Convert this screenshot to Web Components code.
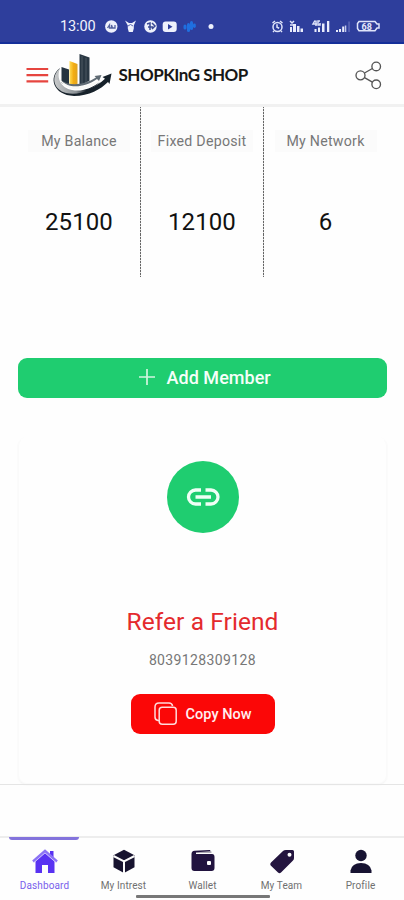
<!DOCTYPE html>
<html lang="en"><head><meta charset="utf-8"><title>Shopking Shop</title>
<style>html,body{margin:0;background:#fefefe}body{font-family:Roboto,"Liberation Sans",sans-serif;width:404px;height:900px;overflow:hidden}</style></head>
<body><shop-app></shop-app>
<script>
const define=(name,html)=>customElements.define(name,class extends HTMLElement{
  constructor(){super();const t=document.createElement('template');t.innerHTML=typeof html==='function'?html(this):html;this.attachShadow({mode:'open'}).append(t.content.cloneNode(true));}
});
define('status-bar',`<style>
:host{display:flex;box-sizing:border-box;height:44px;background:#2e3e9c;border-bottom:2px solid #142f99;padding:17px 24px 0 60px;justify-content:space-between;color:#f1f3fc}
.l{display:flex;gap:10px}time{font-size:14.5px;line-height:20px;width:35px;letter-spacing:-.1px;white-space:nowrap}svg{display:block}</style>
<div class="l"><time>13:00</time>
<svg width="112" height="20" viewBox="105 17 112 20"><g fill="#eef1fc"><circle cx="111.300" cy="26.500" r="6.200"/><path d="M125 20.500l4 2.500h3l4-2.500-2.200 5v3l-1 3.500h-4l-1-3.500v-3z"/><circle cx="150.500" cy="26.500" r="6.200"/><rect x="162.700" y="21.500" width="14" height="10.500" rx="3"/><circle cx="211" cy="26.500" r="2.500"/></g>
<path d="M107.500 28l2-3v3h2v-3l1 3h2.500v-3" fill="none" stroke="#56649f" stroke-width="1.300"/><path d="M147 24l3-1v7m-2-3h5m-1-4l3 3-3 3" fill="none" stroke="#394893" stroke-width="1.500"/><path d="M168 24l4.500 2.700-4.500 2.700z" fill="#2e3e9c"/><path d="M128 26l2.500-1.500L133 26" stroke="#5b69b2" fill="none"/><g fill="#1f6fe0"><rect x="183.500" y="24.500" width="3" height="5" rx="1.500"/><rect x="187" y="23" width="3" height="9" rx="1.500"/><rect x="190" y="21" width="3" height="9" rx="1.500"/><rect x="193" y="23.500" width="2.800" height="4.500" rx="1.400"/></g></svg></div>
<svg width="110" height="20" viewBox="270 17 110 20"><g fill="none" stroke="#dfe4fa" stroke-width="1.500"><circle cx="277.500" cy="27" r="4.500"/><path d="M277 24.300v3l2.200 1M272.500 23l2.500-2M280 21l2.500 2M274 31l-1 1m8-1l1 1M290 21l2 2 2-2M290 25h5M315 20.500l-2 3.500h4m-1-3.500V26m4-5h-2v4h2v-2"/><path d="M359 21.500h16l2 2.500h2v4h-2l-2 2.700h-16l-1.500-2.200v-5z"/></g>
<g fill="#e9ecfb"><path d="M290 27h2v5h-2zM293 24h3v8h-3zM297 26h2.500v6H297zM300.500 28.500h2.500V32h-2.500zM314.500 29h2v3h-2zM318 27.500h2V32h-2zM322 23.500h2.500V32H322zM327 21h2.300v11H327zM336 30h2v2h-2zM339 29h2v3h-2zM342.200 26.500h2V32h-2z"/></g><path d="M344.800 25.500h1.500V32h-1.500z" fill="#c2c9ed"/><path d="M348.300 21.500h1.500V32h-1.500z" fill="#5c68b8"/><text x="361.500" y="29.600" font-family="Roboto,sans-serif" font-size="9" font-weight="700" fill="#e5e9fb">68</text></svg>`);
define('brand-bar',`<style>:host{display:flex;box-sizing:border-box;height:63px;border-bottom:3px solid #f1f1f1;padding:0 21px 0 26px;background:#fefefe}svg{display:block;flex:none}
.name{flex:1;padding:19px 0 0 5.500px;font:700 17px/24px Lato,"Open Sans",sans-serif;letter-spacing:-.5px;color:#171717;white-space:nowrap}</style>
<svg width="87" height="60" viewBox="26 44 87 60"><defs><linearGradient id="sw" x1="0" x2="1"><stop stop-color="#c8cacb"/><stop offset=".48" stop-color="#8c9296"/><stop offset=".7" stop-color="#17212b"/></linearGradient><linearGradient id="y" x1="0" x2="1"><stop stop-color="#ffdc55"/><stop offset=".5" stop-color="#f4ad12"/><stop offset="1" stop-color="#dfa320"/></linearGradient></defs>
<path d="M26.500 69h21.700M26.500 75.200h21.700M26.500 81.300h21.700" stroke="#e6453f" stroke-width="2.200"/>
<path d="M61.500 67l4.500 1.500V85l-4.500-2zM66 68.500l3 1V85l-3 1z" fill="#253440"/><path d="M69.500 61l8 3v21l-8 2z" fill="url(#y)"/><path d="M79.500 54l10 3.500v23.300l-10 5z" fill="#293743"/><path d="M82 56v27M86 58v24" stroke="#4c5962"/>
<path d="M60 68C48 77 53 95 74 96c15 0 27-7 34-14l1.500 2L111.500 73.500l-9 3.500 2.500 1.800C93 90 76 95 65 90 56 86 54 77 60 68z" fill="#17222b"/>
<path d="M60 68C50 77 54 90 66 93c13 3 26-3 34-11-10 7-19 10-28 8-11-2-16-12-12-22z" fill="url(#sw)"/>
<path d="M59 78c4 11 18 14 31 9 5-2 9-5 12-8-14 8-33 11-43-1z" fill="#f8f8f6"/>
<path d="M61 80c7 9 23 8 36-1l2 2 2.500-6-7 1 1.500 1.500C84 85 70 87 61 80z" fill="#606b74"/></svg>
<div class="name">SHOPKInG SHOP</div>
<svg width="28" height="60" viewBox="355 44 28 60" fill="none" stroke="#555" stroke-width="1.350"><circle cx="360.500" cy="75.300" r="4.500"/><circle cx="376.200" cy="66.400" r="4.300"/><circle cx="376.200" cy="84.300" r="4.300"/><path d="M364.500 73l7.900-4.500M364.500 77.600l7.900 4.500"/></svg>`);
define('stat-cell',h=>`<style>:host{display:flex;box-sizing:border-box;flex-direction:column;align-items:center;height:170px;padding-top:23px}
.a{font-size:14.200px;line-height:22px;letter-spacing:.25px;color:#777;background:#fbfbfb;width:102px;text-align:center;white-space:nowrap}.b{font-size:24px;line-height:30px;color:#111;margin-top:55px;letter-spacing:.1px}</style><div class="a">${h.getAttribute('label')}</div><div class="b"><slot></slot></div>`);
define('stat-row',`<style>:host{display:grid;grid-template-columns:123px 123px 123px;padding-left:18px}::slotted(:not(:last-child)){border-right:1px solid;border-image:repeating-linear-gradient(#666 0 2px,#ddd 2px 3px) 1}</style><slot></slot>`);
define('add-button',`<style>:host{display:flex;box-sizing:border-box;align-items:center;gap:12px;margin:81px 17px 0 18px;height:40px;padding:0 0 2px 120.500px;border-radius:9px;background:#1fcd70;color:#f5fff9;font-weight:500;font-size:18px;letter-spacing:.04px}svg{display:block}</style><svg width="16" height="16" stroke="#d2f5df" stroke-width="1.700"><path d="M8 0v16M0 8h16"/></svg><span><slot></slot></span>`);
define('refer-card',`<style>:host{display:flex;box-sizing:border-box;flex-direction:column;align-items:center;height:347px;margin:39px 17px 0 18px;padding-top:23px;border:1px solid #fafafa;border-top-color:#fefefe;border-radius:9px;box-shadow:0 1px 2px #f2f2f2}
.c{width:72px;height:72px;border-radius:50%;background:#1fcd70}.t{font-size:24.500px;line-height:30px;color:#e42a2d;margin-top:74px;letter-spacing:.08px}.n{font-size:14px;line-height:20px;letter-spacing:.38px;color:#777;margin-top:13px}
.b{display:flex;box-sizing:border-box;align-items:center;margin-top:24px;width:144px;height:40px;padding:0 0 0 23px;gap:9px;border-radius:9px;background:#fb0707;color:#fff0f0;font-weight:500;font-size:14.500px;letter-spacing:.05px;white-space:nowrap}.b svg{margin-bottom:2px}svg{display:block}</style>
<svg class="c" viewBox="0 0 72 72" fill="none" stroke="#effff5" stroke-width="3.300"><path d="M34 29h-5.500a7 7 0 0 0 0 14H34M38.500 29H44a7 7 0 0 1 0 14h-5.500M28.500 36H44"/></svg>
<div class="t">Refer a Friend</div><div class="n">8039128309128</div><div class="b"><svg width="23" height="23" viewBox="0 0 23 23" fill="none" stroke="#ffdcdc" stroke-width="1.500"><rect x="5.200" y="5.200" width="17" height="17" rx="3"/><path d="M5 18.500H4Q1 18 1 15V5q0-4 4-4h10q3 0 3.600 3"/></svg><span>Copy Now</span></div>`);
define('nav-item',`<style>:host{display:flex;box-sizing:border-box;flex-direction:column;align-items:center;width:79px;height:61px;padding-top:7px;color:#707070;border-top:2px solid transparent}:host([active]){color:#7a60ec}
::slotted(svg){display:block;width:28px;height:28px}.x{display:block;font-size:10px;line-height:14px;margin-top:4px;letter-spacing:.1px;white-space:nowrap}</style><slot name="icon"></slot><span class="x"><slot></slot></span>`);
define('tab-bar',`<style>:host{display:block;height:64px;border-top:2px solid #ededed;position:relative;box-sizing:border-box;background:#fefefe}nav{display:flex;padding-left:5px;height:61px}
.on{position:absolute;left:9px;top:-1px;width:70px;height:3px;border-radius:0 0 3px 3px;background:#8373dc}.home{position:absolute;left:136px;bottom:2px;width:134px;height:3px;background:#777;border-radius:1px}</style><nav><slot></slot></nav><div class="on"></div><div class="home"></div>`);
define('shop-app',`<style>:host{display:flex;flex-direction:column;height:900px}.gap{height:51px;border-top:1px solid #e5e5e5}</style>
<status-bar></status-bar><brand-bar></brand-bar>
<stat-row><stat-cell label="My Balance">25100</stat-cell><stat-cell label="Fixed Deposit">12100</stat-cell><stat-cell label="My Network">6</stat-cell></stat-row>
<add-button>Add Member</add-button><refer-card></refer-card><div class="gap"></div>
<tab-bar>
<nav-item active><svg slot="icon" viewBox="0 0 28 28"><path d="M4.500 14L14 5.500l9.500 8.500v12H17v-8h-6v8H4.500z" fill="#5932f2"/><path d="M19 4h3.500v8L19 9z" fill="#5932f2"/><path d="M2 14.500L14 4l12 10.500" fill="none" stroke="#8c73f5" stroke-width="2.500"/><path d="M3 15.500L14 6l11 9.500" fill="none" stroke="#e0d8ff" stroke-width=".8"/></svg>Dashboard</nav-item>
<nav-item><svg slot="icon" viewBox="0 0 28 28"><path d="M14 2.800l10.500 5.500v12L14 26 3.500 20.300v-12z" fill="#17132f"/><path d="M3.500 9L14 14.300 24.500 9M14 14.300V26" fill="none" stroke="#fafafa" stroke-width="2"/></svg>My Intrest</nav-item>
<nav-item><svg slot="icon" viewBox="0 0 28 28"><path d="M2.500 7q0-3 3-3.300L21 3l1.500 3H7v1h16q2.500 0 2.500 3v11q0 3-3 3h-17q-3 0-3-3z" fill="#21133f"/><path d="M7 5.300l16-1v1.500H7z" fill="#ddd"/><rect x="18" y="14" width="4" height="4" rx="1" fill="#fff"/></svg>Wallet</nav-item>
<nav-item><svg slot="icon" viewBox="0 0 28 28"><path d="M18 3h6.500q1.500 0 1.500 1.500V11q0 1.500-1 2.500L13 25.500q-1.500 1.500-3 0L2.700 18.500q-1.200-1.500.3-3L15 4q1-1 3-1z" fill="#24153f"/><circle cx="21.500" cy="7.800" r="2" fill="#fff"/></svg>My Team</nav-item>
<nav-item><svg slot="icon" viewBox="0 0 28 28" fill="#171332"><circle cx="14" cy="8.500" r="5.700"/><path d="M3.500 26v-2.500Q5 16 14 16t10.500 7.500V26z"/></svg>Profile</nav-item>
</tab-bar>`);
</script></body></html>
